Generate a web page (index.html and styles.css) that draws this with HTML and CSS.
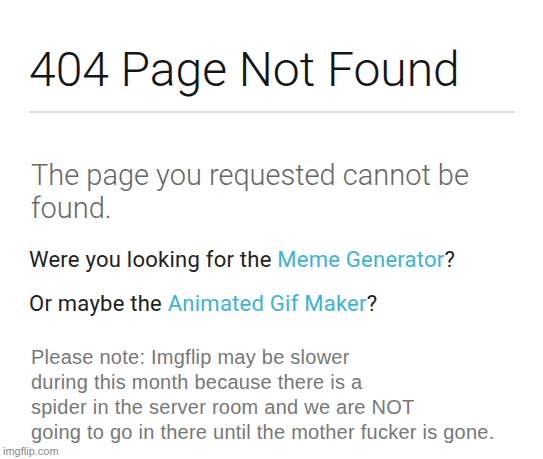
FILE: index.html
```html
<!DOCTYPE html>
<html lang="en">
<head>
  <meta charset="UTF-8" />
  <title>404 Page Not Found</title>
  <link rel="stylesheet" href="styles.css">
</head>
<body>
  <div class="page">
    <h1>404 Page Not Found</h1>
    <hr class="rule">
    <p class="lead">The page you requested cannot be found.</p>
    <p class="ask">Were you looking for the <a href="#">Meme Generator</a>?</p>
    <p class="ask">Or maybe the <a href="#">Animated Gif Maker</a>?</p>
    <p class="note">
      Please note: Imgflip may be slower<br>
      during this month because there is a<br>
      spider in the server room and we are NOT<br>
      going to go in there until the mother fucker is gone.
    </p>
  </div>
  <div class="watermark">imgflip.com</div>
</body>
</html>
```

FILE: styles.css
```css
* {
  box-sizing: border-box;
}

body {
  margin: 0;
  background: #fff;
  font-family: Roboto, "Liberation Sans", sans-serif;
  height: 459px;
  overflow: hidden;
  display: flex;
  flex-direction: column;
}

.page {
  flex: 1;
  padding: 42px 28px 0 29px;
}

h1 {
  margin: 0;
  font-size: 48px;
  font-weight: 300;
  line-height: 56px;
  color: #151515;
}

.rule {
  margin: 13px 0 0;
  border: none;
  border-top: 2px solid #e2e2e2;
}

.lead {
  margin: 46px 0 0 2px;
  font-size: 29px;
  font-weight: 300;
  line-height: 33px;
  color: #666;
  max-width: 460px;
}

.ask {
  margin: 22px 0 0;
  font-size: 22px;
  line-height: 26px;
  letter-spacing: 0.25px;
  color: #222;
}

.ask + .ask {
  margin-top: 18px;
}

.ask a {
  color: #3ab3d9;
  text-decoration: none;
}

.note {
  margin: 28px 0 0 2px;
  font-family: "Liberation Sans", Arial, sans-serif;
  font-size: 20px;
  line-height: 25px;
  letter-spacing: 0.25px;
  color: #777;
}

.watermark {
  padding: 0 0 4px 3px;
  font-family: "Liberation Sans", Arial, sans-serif;
  font-size: 11px;
  color: #888;
}
```
